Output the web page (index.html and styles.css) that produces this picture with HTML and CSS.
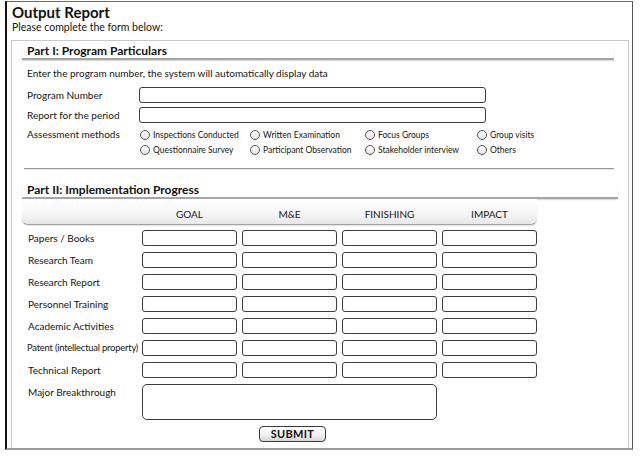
FILE: index.html
```html
<!DOCTYPE html>
<html lang="en">
<head>
<meta charset="utf-8">
<title>Output Report</title>
<link rel="stylesheet" href="styles.css">
</head>
<body>
<div class="frame">
  <header class="page-head">
    <h1 class="title">Output Report</h1>
    <p class="subtitle">Please complete the form below:</p>
  </header>

  <form class="panel" onsubmit="return false">
    <h2 class="section-title">Part I: Program Particulars</h2>
    <p class="intro">Enter the program number, the system will automatically display data</p>

    <div class="field-row first">
      <label class="field-label" for="prog-no">Program Number</label>
      <input class="text-input" id="prog-no" type="text">
    </div>
    <div class="field-row">
      <label class="field-label" for="period">Report for the period</label>
      <input class="text-input" id="period" type="text">
    </div>

    <div class="field-row methods">
      <span class="field-label">Assessment methods</span>
      <div class="radio-grid">
        <label class="radio"><input type="radio" name="method">Inspections Conducted</label>
        <label class="radio"><input type="radio" name="method">Written Examination</label>
        <label class="radio"><input type="radio" name="method">Focus Groups</label>
        <label class="radio"><input type="radio" name="method">Group visits</label>
        <label class="radio"><input type="radio" name="method">Questionnaire Survey</label>
        <label class="radio"><input type="radio" name="method">Participant Observation</label>
        <label class="radio"><input type="radio" name="method">Stakeholder interview</label>
        <label class="radio"><input type="radio" name="method">Others</label>
      </div>
    </div>

    <hr class="divider">

    <h2 class="section-title part-two">Part II: Implementation Progress</h2>

    <div class="progress">
      <div class="progress-head">
        <span></span><span>GOAL</span><span>M&amp;E</span><span>FINISHING</span><span>IMPACT</span>
      </div>
      <div class="progress-row">
        <span class="row-label">Papers / Books</span>
        <input class="cell" type="text"><input class="cell" type="text"><input class="cell" type="text"><input class="cell" type="text">
      </div>
      <div class="progress-row">
        <span class="row-label">Research Team</span>
        <input class="cell" type="text"><input class="cell" type="text"><input class="cell" type="text"><input class="cell" type="text">
      </div>
      <div class="progress-row">
        <span class="row-label">Research Report</span>
        <input class="cell" type="text"><input class="cell" type="text"><input class="cell" type="text"><input class="cell" type="text">
      </div>
      <div class="progress-row">
        <span class="row-label">Personnel Training</span>
        <input class="cell" type="text"><input class="cell" type="text"><input class="cell" type="text"><input class="cell" type="text">
      </div>
      <div class="progress-row">
        <span class="row-label">Academic Activities</span>
        <input class="cell" type="text"><input class="cell" type="text"><input class="cell" type="text"><input class="cell" type="text">
      </div>
      <div class="progress-row">
        <span class="row-label snug">Patent (intellectual property)</span>
        <input class="cell" type="text"><input class="cell" type="text"><input class="cell" type="text"><input class="cell" type="text">
      </div>
      <div class="progress-row">
        <span class="row-label">Technical Report</span>
        <input class="cell" type="text"><input class="cell" type="text"><input class="cell" type="text"><input class="cell" type="text">
      </div>
      <div class="progress-row tall">
        <span class="row-label">Major Breakthrough</span>
        <textarea class="cell note"></textarea>
      </div>
    </div>

    <div class="actions">
      <button class="submit" type="submit">SUBMIT</button>
    </div>
  </form>
</div>
</body>
</html>
```

FILE: styles.css
```css
* {
  box-sizing: border-box;
}

body {
  margin: 0;
  background: #fff;
  color: #151515;
  font-family: Lato, "Open Sans", sans-serif;
  font-size: 10px;
}

/* outer page frame */
.frame {
  display: flex;
  flex-direction: column;
  width: 628px;
  height: 449px;
  margin: 1px 0 0 5px;
  border-left: 2px solid #111;
  border-top: 1px solid #6a6a6a;
  border-right: 1px solid #555;
  border-bottom: 2px solid #9c9c9c;
}

.page-head {
  height: 38px;
  padding: 2px 0 0 5px;
}

.title {
  margin: 0;
  font-size: 15px;
  font-weight: 700;
  line-height: 17px;
  color: #111;
}

.subtitle {
  margin: 0;
  font-size: 10.5px;
  line-height: 12px;
}

/* inner form panel */
.panel {
  flex: 1;
  width: 618px;
  margin: 0 0 0 4px;
  border: 1px solid #c9c9c9;
  border-bottom: none;
}

.section-title {
  margin: 0 14px 0 10px;
  padding: 3px 0 0 5px;
  font-size: 12px;
  font-weight: 700;
  line-height: 14px;
  color: #111;
  border-bottom: 2px solid #a5a5a5;
  box-shadow: 0 1px 1px #dcdcdc;
}

.section-title.part-two {
  margin-top: 11px;
  margin-right: 10px;
}

.intro {
  margin: 7px 0 0 15px;
  line-height: 12px;
}

.field-row {
  display: grid;
  grid-template-columns: 112px 347px;
  align-items: center;
  margin: 4px 0 0 15px;
}

.field-row.first {
  margin-top: 8px;
}

.field-label {
  line-height: 16px;
}

.text-input,
.cell {
  display: block;
  width: 100%;
  height: 16px;
  margin: 0;
  padding: 0 3px;
  border: 1px solid #3c3c3c;
  border-radius: 3px;
  background: #fff;
  font: inherit;
}

/* assessment method radios */
.methods {
  align-items: start;
}

.methods .field-label {
  line-height: 15px;
}

.radio-grid {
  display: grid;
  grid-template-columns: 110px 115px 112px auto;
  grid-auto-rows: 15px;
}

.radio {
  display: flex;
  align-items: center;
  font-size: 8.5px;
  white-space: nowrap;
}

.radio input {
  appearance: none;
  -webkit-appearance: none;
  width: 10px;
  height: 10px;
  margin: 0 3px 0 1px;
  border: 1px solid #555;
  border-radius: 50%;
  background: linear-gradient(#fff, #e4e4e4);
}

.divider {
  height: 0;
  margin: 11px 14px 0 12px;
  border: 0;
  border-top: 1px solid #9a9a9a;
  box-shadow: 0 1px 0 #e6e6e6;
}

/* implementation progress table */
.progress {
  width: 515px;
  margin-left: 10px;
}

.progress-head,
.progress-row {
  display: grid;
  grid-template-columns: 115px repeat(4, 95px);
  column-gap: 5px;
}

.progress-head {
  height: 26px;
  padding-top: 8px;
  line-height: 14px;
  text-align: center;
  border-bottom: 1px solid #a3a3a3;
  border-radius: 0 0 6px 6px;
  background: linear-gradient(#fff, #f8f8f8 50%, #e8e8e8);
  box-shadow: 0 1px 1px rgba(0, 0, 0, 0.12);
}

.progress-row {
  align-items: center;
  height: 16px;
  margin-top: 6px;
}

.progress-head + .progress-row {
  margin-top: 5px;
}

.row-label {
  padding-left: 6px;
  white-space: nowrap;
  line-height: 16px;
}

/* long label squeezed to end right at the first column */
.row-label.snug {
  padding-left: 5px;
  font-size: 9.4px;
  letter-spacing: -0.2px;
}

.progress-row.tall {
  align-items: start;
  height: 36px;
}

.cell.note {
  grid-column: span 3;
  height: 36px;
  border-radius: 5px;
  resize: none;
}

.actions {
  margin: 6px 0 0 247px;
}

.submit {
  display: block;
  width: 67px;
  height: 16px;
  padding: 0;
  border: 1px solid #3a3a3a;
  border-radius: 4px;
  background: linear-gradient(#fff, #f1f1f1 55%, #d6d6d6);
  font-family: inherit;
  font-size: 11px;
  font-weight: 700;
  line-height: 14px;
  color: #111;
  letter-spacing: 0.3px;
}
```
